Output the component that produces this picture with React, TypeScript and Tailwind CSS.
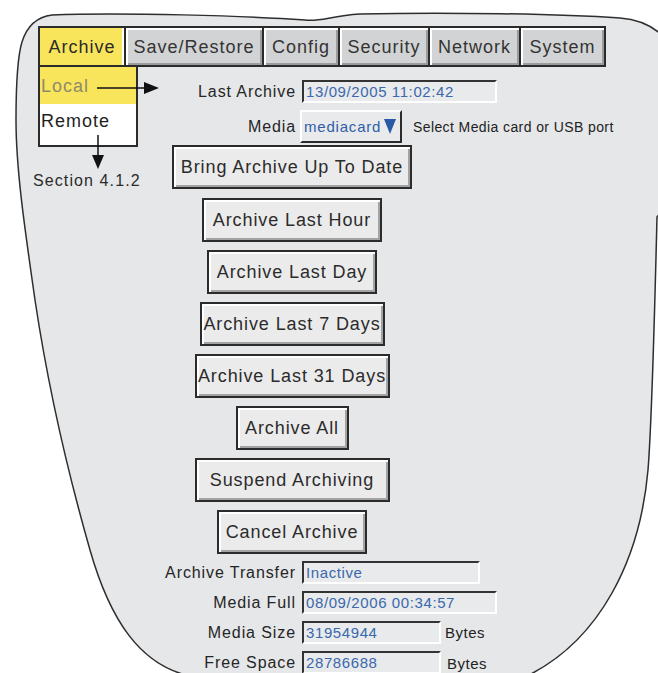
const tabs = [
  { label: 'Archive', w: 'w-[86px]', active: true },
  { label: 'Save/Restore', w: 'w-[138px]' },
  { label: 'Config', w: 'w-[76px]' },
  { label: 'Security', w: 'w-[90px]' },
  { label: 'Network', w: 'w-[91px]' },
  { label: 'System', w: 'w-[83px]' },
];

const buttons = [
  { label: 'Archive Last Hour', w: 'w-[180px]' },
  { label: 'Archive Last Day', w: 'w-[170px]' },
  { label: 'Archive Last 7 Days', w: 'w-[185px]' },
  { label: 'Archive Last 31 Days', w: 'w-[195px]' },
  { label: 'Archive All', w: 'w-[113px]' },
  { label: 'Suspend Archiving', w: 'w-[195px]' },
  { label: 'Cancel Archive', w: 'w-[150px]' },
];

function Field({ value, w }: { value: string; w: string }) {
  return (
    <div
      className={`${w} h-[23px] shrink-0 bg-[#e9eaeb] border-2 border-t-[#333] border-l-[#333] border-b-white border-r-white pl-[2px] flex items-center whitespace-nowrap text-[15px] tracking-[0.6px] text-[#3a68ad] leading-none`}
    >
      {value}
    </div>
  );
}

function Label({ text }: { text: string }) {
  return (
    <div className="w-[158px] shrink-0 whitespace-nowrap text-right text-[16px] tracking-[0.9px] text-[#252525] leading-none">
      {text}
    </div>
  );
}

function ActionButton({ label, w }: { label: string; w: string }) {
  return (
    <button
      className={`${w} h-[44px] shrink-0 whitespace-nowrap border-2 border-[#2b2b2b] bg-[#ebebec] shadow-[inset_2px_2px_0_#ffffff,inset_-2px_-2px_0_#a3a3a3] text-[18px] tracking-[0.9px] text-[#2b2b2b] leading-none`}
    >
      {label}
    </button>
  );
}

export default function App() {
  return (
    <div className="relative w-[658px] h-[673px] overflow-hidden bg-white font-['Liberation_Sans',Arial,sans-serif]">
      {/* bezel outline */}
      <svg className="absolute inset-0 pointer-events-none" width="658" height="673" viewBox="0 0 658 673">
        <path
          d="M 52 15 C 120 12, 250 16, 305 20 C 320 22, 330 16, 360 14 C 450 12, 560 14, 620 18 C 645 20, 660 30, 670 45 L 670 200 L 657 217 C 655 300, 652 420, 648 470 C 640 560, 600 640, 527 676 L 190 676 C 140 665, 110 620, 90 550 C 70 480, 50 400, 35 300 C 25 230, 16 170, 16 120 C 16 80, 18 55, 22 42 C 27 26, 36 17, 52 15 Z"
          fill="#e6e7e9"
          stroke="#2e2e2e"
          strokeWidth="1.5"
        />
      </svg>

      <div className="relative pt-[26px] pl-[38px]">
        {/* tab bar */}
        <div className="flex h-[41px] w-max border-2 border-[#2b2b2b]">
          {tabs.map((t, i) => (
            <div
              key={t.label}
              className={`${t.w} h-full flex items-center justify-center whitespace-nowrap text-[18px] tracking-[1px] leading-none ${
                i < tabs.length - 1 ? 'border-r-2 border-[#2b2b2b]' : ''
              } ${
                t.active
                  ? 'bg-[#f8e55c] text-[#2b2b2b] shadow-[inset_-2px_0_0_#ffffff]'
                  : 'bg-[#d2d3d4] text-[#333] shadow-[inset_2px_2px_0_#ffffff,inset_-2px_-2px_0_#9c9c9c]'
              }`}
            >
              {t.label}
            </div>
          ))}
        </div>

        <div className="flex">
          {/* left column: submenu */}
          <div className="w-[100px] shrink-0">
            <div className="border-2 border-t-0 border-[#2b2b2b] w-[100px]">
              <div className="h-[37px] bg-[#f8e55c] flex items-center pl-[1px] text-[18px] tracking-[1px] text-[#8e8b6c] leading-none">
                Local
              </div>
              <div className="h-[41px] bg-white flex items-start pt-[8px] pl-[1px] text-[18px] tracking-[1px] text-[#1f1f1f] leading-none">
                Remote
              </div>
            </div>
            <div className="-ml-[5px] mt-[26px] text-[16px] tracking-[1.1px] text-[#2b2b2b] leading-none whitespace-nowrap">
              Section 4.1.2
            </div>
          </div>

          {/* right column */}
          <div className="w-[308px] shrink-0 pt-[13px] flex flex-col">
            <div className="flex items-center">
              <Label text="Last Archive" />
              <div className="ml-[6px] shrink-0">
                <Field value="13/09/2005 11:02:42" w="w-[195px]" />
              </div>
            </div>

            <div className="flex items-center mt-[7px]">
              <Label text="Media" />
              <div className="ml-[4px] w-[102px] h-[33px] shrink-0 bg-[#e9eaeb] border-2 border-t-white border-l-white border-b-[#2b2b2b] border-r-[#2b2b2b] flex items-center pl-[2px] gap-[3px]">
                <span className="text-[15px] tracking-[0.8px] text-[#2f5ea8] leading-none">mediacard</span>
                <svg width="12" height="17" viewBox="0 0 12 17">
                  <polygon points="0,1 12,1 6,16" fill="#2a5aa5" />
                </svg>
              </div>
              <div className="ml-[11px] shrink-0 whitespace-nowrap text-[14px] tracking-[0.4px] text-[#222] leading-none">
                Select Media card or USB port
              </div>
            </div>

            <div className="flex flex-col items-center mt-[2px]">
              <ActionButton label="Bring Archive Up To Date" w="w-[240px]" />
              <div className="flex flex-col items-center gap-[8px] mt-[9px]">
                {buttons.map((b) => (
                  <ActionButton key={b.label} label={b.label} w={b.w} />
                ))}
              </div>
            </div>

            <div className="flex flex-col gap-[7px] mt-[7px]">
              <div className="flex items-center">
                <Label text="Archive Transfer" />
                <div className="ml-[6px] shrink-0">
                  <Field value="Inactive" w="w-[178px]" />
                </div>
              </div>
              <div className="flex items-center">
                <Label text="Media Full" />
                <div className="ml-[6px] shrink-0">
                  <Field value="08/09/2006 00:34:57" w="w-[195px]" />
                </div>
              </div>
              <div className="flex items-center">
                <Label text="Media Size" />
                <div className="ml-[6px] shrink-0">
                  <Field value="31954944" w="w-[139px]" />
                </div>
                <span className="ml-[4px] shrink-0 text-[15px] tracking-[0.5px] text-[#222] leading-none">Bytes</span>
              </div>
              <div className="flex items-center">
                <Label text="Free Space" />
                <div className="ml-[6px] shrink-0">
                  <Field value="28786688" w="w-[139px]" />
                </div>
                <span className="ml-[6px] mt-[2px] shrink-0 text-[15px] tracking-[0.5px] text-[#222] leading-none">Bytes</span>
              </div>
            </div>
          </div>
        </div>
      </div>

      {/* annotation arrows */}
      <svg className="absolute inset-0 pointer-events-none" width="658" height="673" viewBox="0 0 658 673">
        <line x1="97" y1="88" x2="146" y2="88" stroke="#111" strokeWidth="1.5" />
        <polygon points="144,82 159,88 144,94" fill="#111" />
        <line x1="98" y1="135" x2="98" y2="157" stroke="#111" strokeWidth="1.5" />
        <polygon points="92,155 98,169 104,155" fill="#111" />
      </svg>
    </div>
  );
}
